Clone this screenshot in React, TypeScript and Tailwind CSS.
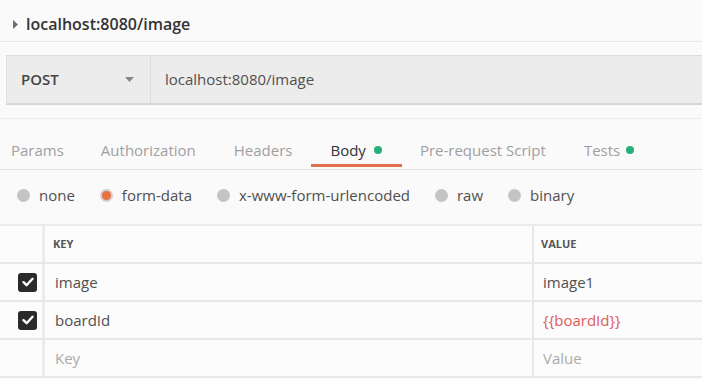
import React from "react";

const font = { fontFamily: '"Open Sans", "Noto Sans", sans-serif' };

function Radio({ label, selected }: { label: string; selected?: boolean }) {
  return (
    <div className="flex items-center">
      {selected ? (
        <span className="w-[13px] h-[13px] rounded-full bg-[#cfcfcf] flex items-center justify-center">
          <span className="w-[9px] h-[9px] rounded-full bg-[#e9703f]" />
        </span>
      ) : (
        <span className="w-[13px] h-[13px] rounded-full bg-[#c4c4c4]" />
      )}
      <span className="ml-[9px] text-[15px] text-[#505050]">{label}</span>
    </div>
  );
}

function Check() {
  return (
    <span className="w-[19px] h-[19px] rounded-[3px] bg-[#2a2a2a] flex items-center justify-center">
      <svg width="12" height="10" viewBox="0 0 12 10">
        <path d="M1.5 5.2 L4.6 8.2 L10.5 1.8" fill="none" stroke="#fff" strokeWidth="2.4" strokeLinecap="round" strokeLinejoin="round" />
      </svg>
    </span>
  );
}

function Row({ check, k, v, kClass, vClass }: { check?: boolean; k: string; v: string; kClass: string; vClass: string }) {
  return (
    <div className="flex h-[38px] border-b-2 border-[#e8e8e8]">
      <div className="w-[45px] flex items-center justify-end pr-[5px] border-r-[3px] border-[#ececec]">
        {check && <Check />}
      </div>
      <div className={`w-[489px] flex items-center pl-[10px] text-[15px] border-r-[2px] border-[#e8e8e8] ${kClass}`}>{k}</div>
      <div className={`flex-1 flex items-center pl-[9px] text-[15px] ${vClass}`}>{v}</div>
    </div>
  );
}

export default function App() {
  return (
    <div className="w-[702px] h-[379px] bg-[#fafafa] overflow-hidden" style={font}>
      <div className="h-[42px] flex items-center pl-[13px] pt-[6px] border-b border-[#e6e6e6]">
        <svg width="5" height="9" viewBox="0 0 5 9" className="mt-[1px]">
          <path d="M0 0 L5 4.5 L0 9 Z" fill="#707070" />
        </svg>
        <span className="ml-[8px] text-[16px] font-semibold text-[#333]">localhost:8080/image</span>
      </div>
      <div className="pt-[13px] pl-[6px]">
        <div className="h-[50px] flex border-t border-[#dadada] border-b-2 border-b-[#d6d6d6] border-l border-l-[#e2e2e2] bg-[#ececec]">
          <div className="w-[144px] flex items-center pl-[14px] pr-[16px] border-r border-[#dcdcdc]">
            <span className="text-[15px] font-semibold text-[#444] flex-1">POST</span>
            <svg width="9" height="5" viewBox="0 0 9 5">
              <path d="M0 0 L9 0 L4.5 5 Z" fill="#888" />
            </svg>
          </div>
          <div className="flex items-center pl-[14px] text-[15px] text-[#505050]">localhost:8080/image</div>
        </div>
      </div>
      <div className="mt-[13px] border-t border-[#ececec] h-[52px] border-b border-b-[#e4e4e4] text-[15px] text-[#a0a0a0]">
        <div className="flex items-start h-full pl-[11px]">
          <span className="pt-[20px]">Params</span>
          <span className="pt-[20px] ml-[37px]">Authorization</span>
          <span className="pt-[20px] ml-[38px]">Headers</span>
          <div className="relative h-full ml-[19px]">
            <div className="flex items-center pt-[20px] pl-[19px] pr-[20px]">
              <span className="text-[#333]">Body</span>
              <span className="ml-[8px] w-[8px] h-[8px] rounded-full bg-[#27ae7a]" />
            </div>
            <span className="absolute left-0 right-0 bottom-[2px] h-[3px] bg-[#e1704a]" />
          </div>
          <span className="ml-[18px] pt-[20px]">Pre-request Script</span>
          <div className="flex items-center pt-[20px] ml-[38px]">
            <span>Tests</span>
            <span className="ml-[6px] w-[8px] h-[8px] rounded-full bg-[#27ae7a]" />
          </div>
        </div>
      </div>
      <div className="h-[54px] flex items-center pl-[17px] gap-[25px] pb-[3px]">
        <Radio label="none" />
        <Radio label="form-data" selected />
        <Radio label="x-www-form-urlencoded" />
        <Radio label="raw" />
        <Radio label="binary" />
      </div>
      <div className="border-t-2 border-[#ebebeb] bg-[#fcfcfc]">
        <div className="flex h-[38px] border-b-2 border-[#e8e8e8]">
          <div className="w-[45px] border-r-[3px] border-[#ececec]" />
          <div className="w-[489px] flex items-center pl-[8px] text-[11px] font-bold text-[#555] border-r-[2px] border-[#e8e8e8]">KEY</div>
          <div className="flex-1 flex items-center pl-[7px] text-[11px] font-bold text-[#555]">VALUE</div>
        </div>
        <Row check k="image" v="image1" kClass="text-[#505050]" vClass="text-[#505050]" />
        <Row check k="boardId" v="{{boardId}}" kClass="text-[#505050]" vClass="text-[#e05a5a]" />
        <Row k="Key" v="Value" kClass="text-[#aaa]" vClass="text-[#aaa]" />
      </div>
    </div>
  );
}
